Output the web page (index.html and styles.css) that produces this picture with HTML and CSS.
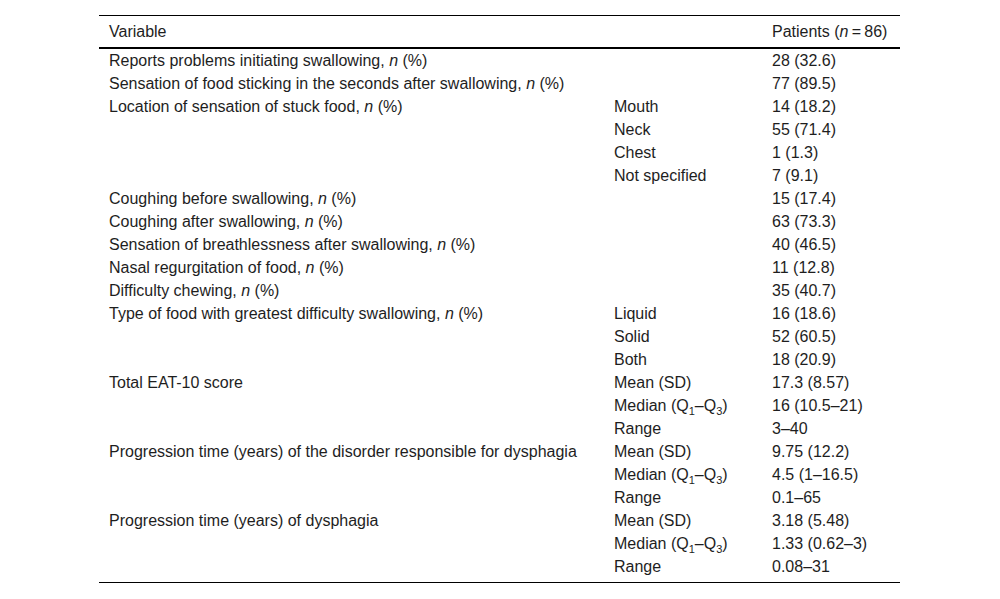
FILE: index.html
```html
<!DOCTYPE html>
<html lang="en">
<head>
<meta charset="utf-8">
<title>Dysphagia characteristics</title>
<link rel="stylesheet" href="styles.css">
</head>
<body>
<div class="wrap">
<table class="data">
<colgroup><col class="c1"><col class="c2"><col class="c3"></colgroup>
<thead>
<tr><th>Variable</th><th></th><th>Patients (<i>n</i>&#8201;=&#8201;86)</th></tr>
</thead>
<tbody>
<tr><td>Reports problems initiating swallowing, <i>n</i> (%)</td><td></td><td>28 (32.6)</td></tr>
<tr><td>Sensation of food sticking in the seconds after swallowing, <i>n</i> (%)</td><td></td><td>77 (89.5)</td></tr>
<tr><td>Location of sensation of stuck food, <i>n</i> (%)</td><td>Mouth</td><td>14 (18.2)</td></tr>
<tr><td></td><td>Neck</td><td>55 (71.4)</td></tr>
<tr><td></td><td>Chest</td><td>1 (1.3)</td></tr>
<tr><td></td><td>Not specified</td><td>7 (9.1)</td></tr>
<tr><td>Coughing before swallowing, <i>n</i> (%)</td><td></td><td>15 (17.4)</td></tr>
<tr><td>Coughing after swallowing, <i>n</i> (%)</td><td></td><td>63 (73.3)</td></tr>
<tr><td>Sensation of breathlessness after swallowing, <i>n</i> (%)</td><td></td><td>40 (46.5)</td></tr>
<tr><td>Nasal regurgitation of food, <i>n</i> (%)</td><td></td><td>11 (12.8)</td></tr>
<tr><td>Difficulty chewing, <i>n</i> (%)</td><td></td><td>35 (40.7)</td></tr>
<tr><td>Type of food with greatest difficulty swallowing, <i>n</i> (%)</td><td>Liquid</td><td>16 (18.6)</td></tr>
<tr><td></td><td>Solid</td><td>52 (60.5)</td></tr>
<tr><td></td><td>Both</td><td>18 (20.9)</td></tr>
<tr><td>Total EAT-10 score</td><td>Mean (SD)</td><td>17.3 (8.57)</td></tr>
<tr><td></td><td>Median (Q<sub>1</sub>–Q<sub>3</sub>)</td><td>16 (10.5–21)</td></tr>
<tr><td></td><td>Range</td><td>3–40</td></tr>
<tr><td>Progression time (years) of the disorder responsible for dysphagia</td><td>Mean (SD)</td><td>9.75 (12.2)</td></tr>
<tr><td></td><td>Median (Q<sub>1</sub>–Q<sub>3</sub>)</td><td>4.5 (1–16.5)</td></tr>
<tr><td></td><td>Range</td><td>0.1–65</td></tr>
<tr><td>Progression time (years) of dysphagia</td><td>Mean (SD)</td><td>3.18 (5.48)</td></tr>
<tr><td></td><td>Median (Q<sub>1</sub>–Q<sub>3</sub>)</td><td>1.33 (0.62–3)</td></tr>
<tr class="last"><td></td><td>Range</td><td>0.08–31</td></tr>
</tbody>
</table>
</div>
</body>
</html>
```

FILE: styles.css
```css
html, body {
  margin: 0;
  padding: 0;
  background: #fff;
}

body {
  font-family: "Liberation Sans", Arial, sans-serif;
  font-size: 16px;
  color: #1e1e1e;
}

.wrap {
  padding: 15px 0 0 99px;
}

.data {
  width: 801px;
  border-collapse: separate;
  border-spacing: 0;
  table-layout: fixed;
}

.c1 { width: 505px; }
.c2 { width: 158px; }
.c3 { width: 138px; }

.data th,
.data td {
  padding: 3px 0 3px 10px;
  height: 17px;
  line-height: 17px;
  text-align: left;
  vertical-align: top;
  white-space: nowrap;
  font-weight: normal;
}

.data th {
  padding-top: 7px;
  padding-bottom: 7px;
  border-top: 1px solid #000;
  border-bottom: 2px solid #000;
}

.data tr.last td {
  padding-bottom: 7px;
  border-bottom: 1px solid #000;
}

.data sub {
  font-size: 11px;
  line-height: 0;
  vertical-align: -4px;
}
```
